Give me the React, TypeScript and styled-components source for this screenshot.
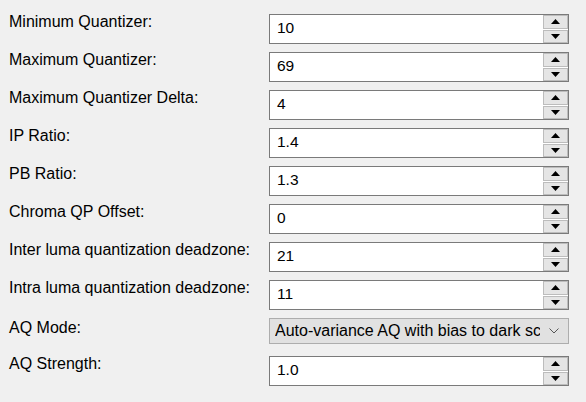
import React from "react";
import styled, { createGlobalStyle } from "styled-components";

const Global = createGlobalStyle`
  html, body { margin: 0; padding: 0; background: #f0f0f0; }
  body { font-family: "Liberation Sans", Arial, sans-serif; color: #000; }
`;

const Form = styled.div`
  display: grid;
  grid-template-columns: 260px 300px;
  grid-auto-rows: 30px;
  row-gap: 8px;
  padding: 14px 0 0 9px;
  width: 586px;
  height: 402px;
  box-sizing: border-box;
`;

const Label = styled.div<{ $offset?: number }>`
  font-size: 16px;
  line-height: 16px;
  padding-top: ${(p) => p.$offset ?? 0}px;
  white-space: nowrap;
`;

const SpinBox = styled.div`
  display: flex;
  height: 30px;
  box-sizing: border-box;
  border: 1px solid #7a7a7a;
  background: #fff;
`;

const SpinText = styled.div`
  flex: 1;
  display: flex;
  align-items: center;
  padding: 0 0 2px 7px;
  font-size: 15.5px;
`;

const SpinButtons = styled.div`
  display: flex;
  flex-direction: column;
  width: 25px;
  gap: 1px;
`;

const SpinButton = styled.div`
  flex: 1;
  display: flex;
  align-items: center;
  justify-content: center;
  background: #e5e5e5;
  border: 1px solid #bcbcbc;
  box-sizing: border-box;
`;

const Combo = styled.div`
  position: relative;
  height: 26px;
  box-sizing: border-box;
  border: 1px solid #adadad;
  background: #e1e1e1;
  display: flex;
  align-items: center;
  padding: 0 28px 1px 5px;
  font-size: 16px;
  overflow: hidden;
  white-space: nowrap;
`;

const ComboText = styled.span`
  overflow: hidden;
  flex: 1;
`;

const Chevron = styled.svg`
  position: absolute;
  right: 9px;
  top: 9px;
`;

const Up = () => (
  <svg width="9" height="5" viewBox="0 0 9 5">
    <polygon points="0,5 9,5 4.5,0" fill="#000" />
  </svg>
);
const Down = () => (
  <svg width="9" height="5" viewBox="0 0 9 5">
    <polygon points="0,0 9,0 4.5,5" fill="#000" />
  </svg>
);

const Spin = ({ value }: { value: string }) => (
  <SpinBox>
    <SpinText>{value}</SpinText>
    <SpinButtons>
      <SpinButton>
        <Up />
      </SpinButton>
      <SpinButton>
        <Down />
      </SpinButton>
    </SpinButtons>
  </SpinBox>
);

const rows: [string, string][] = [
  ["Minimum Quantizer:", "10"],
  ["Maximum Quantizer:", "69"],
  ["Maximum Quantizer Delta:", "4"],
  ["IP Ratio:", "1.4"],
  ["PB Ratio:", "1.3"],
  ["Chroma QP Offset:", "0"],
  ["Inter luma quantization deadzone:", "21"],
  ["Intra luma quantization deadzone:", "11"],
];

export default function App() {
  return (
    <>
      <Global />
      <Form>
        {rows.map(([l, v]) => (
          <React.Fragment key={l}>
            <Label>{l}</Label>
            <Spin value={v} />
          </React.Fragment>
        ))}
        <Label $offset={2}>AQ Mode:</Label>
        <Combo>
          <ComboText>Auto-variance AQ with bias to dark scenes</ComboText>
          <Chevron width="10" height="6" viewBox="0 0 10 6">
            <polyline points="0.5,0.5 5,5 9.5,0.5" fill="none" stroke="#555" strokeWidth="1" />
          </Chevron>
        </Combo>
        <Label>AQ Strength:</Label>
        <Spin value="1.0" />
      </Form>
    </>
  );
}
